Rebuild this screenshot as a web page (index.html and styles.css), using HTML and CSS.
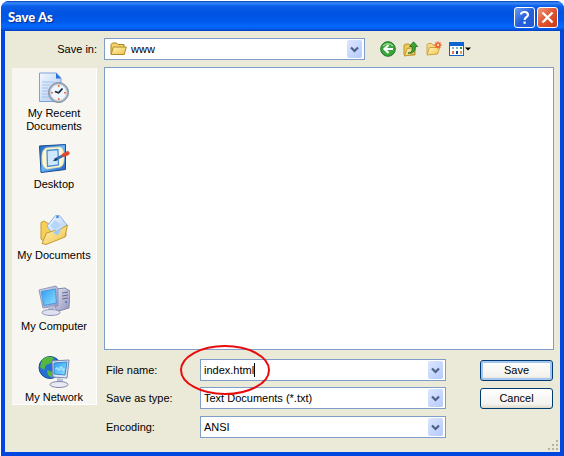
FILE: index.html
```html
<!DOCTYPE html>
<html lang="en">

<head>
    <meta charset="UTF-8" />
    <meta name="viewport" content="width=device-width, initial-scale=1.0" />
    <title>Save As</title>
    <link rel="stylesheet" href="styles.css">
</head>

<body>
    <!-- Shared gradients -->
    <svg class="defs" width="0" height="0" aria-hidden="true">
        <defs>
            <linearGradient id="folder" x1="0" y1="0" x2="1" y2="1">
                <stop offset="0" stop-color="#fff6b8" />
                <stop offset="1" stop-color="#f0c04a" />
            </linearGradient>
            <linearGradient id="screen" x1="0" y1="0" x2="1" y2="1">
                <stop offset="0" stop-color="#2f9cf0" />
                <stop offset="1" stop-color="#8fe0ff" />
            </linearGradient>
            <linearGradient id="paper" x1="0" y1="0" x2="1" y2="1">
                <stop offset="0" stop-color="#f4f9ff" />
                <stop offset="1" stop-color="#a9c8f2" />
            </linearGradient>
            <linearGradient id="metal" x1="0" y1="0" x2="1" y2="1">
                <stop offset="0" stop-color="#e4e4f2" />
                <stop offset="1" stop-color="#8f92b8" />
            </linearGradient>
            <linearGradient id="desk" x1="0" y1="0" x2="1" y2="1">
                <stop offset="0" stop-color="#1c62c0" />
                <stop offset=".5" stop-color="#6ab8fa" />
                <stop offset="1" stop-color="#1c5cb8" />
            </linearGradient>
        </defs>
        <symbol id="chevron" viewBox="0 0 9 7">
            <path d="M1 1.5l3.5 3.5L8 1.5" fill="none" stroke="#4d6185" stroke-width="2.2" />
        </symbol>
    </svg>

    <div class="window">
        <header class="titlebar">
            <h1>Save As</h1>
            <button class="title-btn help" aria-label="Help">
                <svg width="19" height="19" viewBox="0 0 19 19"><path d="M6 6.5C6 3.2 13 3 13 6.7c0 2.5-3.4 2.5-3.4 5.2M9.6 13.4v2.4" fill="none" stroke="#fff" stroke-width="2.2" /></svg>
            </button>
            <button class="title-btn close" aria-label="Close">
                <svg width="19" height="19" viewBox="0 0 19 19"><path d="M4.5 4.5l10 10M14.5 4.5l-10 10" fill="none" stroke="#fff" stroke-width="2.4" /></svg>
            </button>
        </header>

        <main class="content">
            <div class="toolbar">
                <label for="saveIn">Save in:</label>
                <div class="combo save-in">
                    <svg class="combo-icon" width="17" height="14" viewBox="0 0 17 14"><path d="M1 12V2.5L2.500 1h4L8 2.500h6V5" fill="#f3d36a" stroke="#a98220" /><path d="M1 12.500L3.500 5h12.800l-2 7.500z" fill="url(#folder)" stroke="#b08a26" /></svg>
                    <select id="saveIn"><option>www</option></select>
                    <span class="arrow"><svg width="9" height="7"><use href="#chevron" /></svg></span>
                </div>
                <div class="tools">
                    <button aria-label="Back">
                        <svg width="16" height="16" viewBox="0 0 16 16"><circle cx="8" cy="8" r="7.3" fill="#3aa63c" stroke="#1c7425" /><path d="M3 5a6 5 0 0 1 10 0" fill="none" stroke="#8ed488" stroke-width="1.5" /><path d="M13 8H5M8.500 4L4.500 8l4 4" fill="none" stroke="#fff" stroke-width="2.200" /></svg>
                    </button>
                    <button aria-label="Up one level">
                        <svg width="16" height="16" viewBox="0 0 16 16"><path d="M1 14V4l2-1h3l1 1h5v10z" fill="#f0ca58" stroke="#bd9430" /><path d="M1.500 15L4 7.500l8.500-1L11 13.500z" fill="url(#folder)" stroke="#bd9430" /><path d="M5 12c4 0 4.500-3 4.200-6.500H6.500L10.500.8l4.200 4.700h-2.500c.2 4.500-2 7.500-7.200 6.500z" fill="#38a838" stroke="#176d20" stroke-width=".8" /></svg>
                    </button>
                    <button aria-label="Create new folder">
                        <svg width="16" height="16" viewBox="0 0 16 16"><path d="M1 13V3.500L2 2.500h3.500L7 4h5v3" fill="#f5d983" stroke="#c9a348" /><path d="M1 14l2.500-7.500h10.300L11.500 13z" fill="url(#folder)" stroke="#cba548" /><path d="M12 .5v7M8.500 4h7M9.500 1.500l5 5M14.500 1.500l-5 5" stroke="#f0582c" stroke-width="1.400" /><circle cx="12" cy="4" r="1.200" fill="#ffe3a0" /></svg>
                    </button>
                    <button aria-label="View menu">
                        <svg width="22" height="16" viewBox="0 0 22 16"><rect x=".5" y="1.5" width="14" height="13" fill="#fff" stroke="#1763c4" /><path d="M0 1h15v4H0z" fill="#0c63d2" /><path d="M3 6h2v2H3zM7 6h2v2H7z" fill="#8cacc8" /><path d="M11 6h2v2h-2z" fill="#2e9b3c" /><path d="M3 10h2v3H3z" fill="#e6704f" /><path d="M7 10h2v3H7z" fill="#123f91" /><path d="M11 10h2v3h-2z" fill="#d2a35b" /><path d="M16 6.500h6l-3 3z" fill="#000" /></svg>
                    </button>
                </div>
            </div>

            <div class="main">
                <nav class="places">
                    <a href="#recent">
                        <svg width="32" height="32" viewBox="0 0 32 32"><path d="M1.500 1h17l4.500 5v23.500H1.500z" fill="url(#paper)" stroke="#7fa1d8" /><path d="M18 1v5.500h5z" fill="#2772d5" /><path d="M4 10h12M4 13h8M4 16h6M4 19h6M4 22h6M4 25h8" stroke="#a4c0ea" /><circle cx="20.500" cy="20.500" r="10" fill="#a9b3c2" stroke="#7c879a" /><circle cx="20.500" cy="20.500" r="8" fill="#eef7ff" stroke="#ced8e5" /><path d="M20.500 21l4-4.500M17 19.500l4 1.500" stroke="#17233c" stroke-width="1.800" /><path d="M20 13h1.500v2H20zM20 26h1.500v2H20zM13 20h2v1.500h-2zM26 20h2v1.500h-2z" fill="#ee7333" /></svg>
                        <span>My Recent Documents</span>
                    </a>
                    <a href="#desktop">
                        <svg width="32" height="32" viewBox="0 0 32 32"><path d="M1.500 3l26-1.500v25L3 29.500z" fill="url(#desk)" stroke="#174c95" /><path d="M8 5l14-1c3 1 4 5 4 10 0 6-1 9-4 10L9 26c-4-2-5-5-5-11S5 7 8 5z" fill="#fff6cf" stroke="#ecdca4" stroke-width=".7" /><path d="M9 7.500l11-1 .5 15.500-11 1.500z" fill="#cfe8ff" stroke="#4a90d4" stroke-width="1.300" /><path d="M16.500 17l10.500-5.500" stroke="#3b6cb0" stroke-width="2.600" /><path d="M14.500 18.200l4-3.200 1 2.200z" fill="#16325d" /><path d="M26 12l3.500-1.800" stroke="#e04830" stroke-width="4" stroke-linecap="round" /></svg>
                        <span>Desktop</span>
                    </a>
                    <a href="#documents">
                        <svg width="32" height="32" viewBox="0 0 32 32"><path d="M3 25V8.500L6 7l5 3v5l16-2 1 9L8 29z" fill="#f6cf58" stroke="#c39a34" /><path d="M17.500 1.500h4L29 11 18 26 9 12z" fill="url(#paper)" stroke="#8ab4ea" /><path d="M17 6l6 5-6 5-5-4z" fill="#b4d6fa" /><circle cx="19.500" cy="3" r="1.300" fill="#3c86d0" /><path d="M4 29.500L8.500 19l8-2.500 2 1L29.500 11 27 23 8 30.500z" fill="url(#folder)" stroke="#c39a34" /><path d="M15 18.500l9-4.500-4.500 7.500z" fill="#9ccaf8" /></svg>
                        <span>My Documents</span>
                    </a>
                    <a href="#computer">
                        <svg width="32" height="32" viewBox="0 0 32 32"><path d="M18 4l9-1 5 3-1 17-10 3-4-3z" fill="url(#metal)" stroke="#8488b0" /><path d="M24 8l6-1M24 11l6-1M24 14l6-1" stroke="#666b98" /><circle cx="28" cy="17" r="1" fill="#456ec5" /><path d="M1 5l17-4 2 3v17L5 23z" fill="url(#metal)" stroke="#8e95c0" /><path d="M3 6.500L17.500 4l.8 14L6 20.500z" fill="url(#screen)" stroke="#4b9ae0" /><path d="M10 22l6-1 1 5-6 1z" fill="#b9bdd6" /><ellipse cx="13" cy="27.500" rx="9" ry="3" fill="#dfe1ef" stroke="#8f93b6" /></svg>
                        <span>My Computer</span>
                    </a>
                    <a href="#network">
                        <svg width="32" height="32" viewBox="0 0 32 32"><circle cx="12" cy="11.500" r="11" fill="#256fd1" stroke="#184b9a" /><path d="M4 4c3-4 9-4 12-2l-3 5-5 2-2 5-4-3zM9 14l6 2-1 6-4-3z" fill="#55b83c" /><path d="M14 5l17-1-2 18-14-1z" fill="#e0e6f4" stroke="#7c89af" /><path d="M16 7l13-1-2 13-11-1z" fill="url(#screen)" stroke="#3c88cc" /><path d="M18 14v-2h2v2h2v-3h2v3h2v-2" fill="none" stroke="#b9efff" /><path d="M19 22l6 1v4h-6z" fill="#bdc2d8" /><ellipse cx="21" cy="28.500" rx="9" ry="3" fill="#e8eaf4" stroke="#8389aa" /></svg>
                        <span>My Network</span>
                    </a>
                </nav>

                <div class="right">
                    <div class="file-list" role="listbox" aria-label="Files"></div>

                    <form class="fields" onsubmit="return false">
                        <div class="field">
                            <label for="fileName">File name:</label>
                            <div class="combo">
                                <input type="text" id="fileName" value="index.html" />
                                <span class="caret"></span>
                                <button type="button" class="arrow" aria-label="Recent names"><svg width="9" height="7"><use href="#chevron" /></svg></button>
                                <svg class="marker" width="92" height="52" viewBox="0 0 92 52"><ellipse cx="46" cy="26" rx="44" ry="24" fill="none" stroke="#e80c0c" stroke-width="2" /></svg>
                            </div>
                            <button class="push default" type="submit">Save</button>
                        </div>
                        <div class="field">
                            <label for="fileType">Save as type:</label>
                            <div class="combo">
                                <select id="fileType"><option>Text Documents (*.txt)</option></select>
                                <span class="arrow"><svg width="9" height="7"><use href="#chevron" /></svg></span>
                            </div>
                            <button class="push" type="button">Cancel</button>
                        </div>
                        <div class="field encoding">
                            <label for="encoding">Encoding:</label>
                            <div class="combo">
                                <select id="encoding"><option>ANSI</option></select>
                                <span class="arrow"><svg width="9" height="7"><use href="#chevron" /></svg></span>
                            </div>
                        </div>
                    </form>
                </div>
            </div>
            <svg class="grip" width="11" height="11" viewBox="0 0 11 11"><path d="M8 0h2v2H8zM4 4h2v2H4zM8 4h2v2H8zM0 8h2v2H0zM4 8h2v2H4zM8 8h2v2H8z" fill="#b5b19e" /></svg>
        </main>
    </div>
</body>

</html>
```
FILE: styles.css
```css
* {
    margin: 0;
    padding: 0;
    box-sizing: border-box;
}

body {
    background-color: #ffffff;
    font-family: "Liberation Sans", Arial, sans-serif;
    font-size: 11px;
    line-height: 13px;
    color: #000000;
    min-height: 100vh;
    display: flex;
    padding: 1px 0 0 1px;
}

button,
input,
select {
    font: inherit;
    color: inherit;
}

svg {
    display: block;
}

.defs {
    position: absolute;
}

.window {
    flex: 1;
    display: flex;
    flex-direction: column;
    background-color: #0046df;
    border-radius: 8px 8px 0 0;
    overflow: hidden;
}

/* Title bar */
.titlebar {
    display: flex;
    align-items: center;
    gap: 2px;
    height: 30px;
    padding: 3px 6px 0 7px;
    background: linear-gradient(#0842b8 0, #3a8cfa 2px, #0a5ee8 5px, #0054e0 12px, #0058ec 20px, #0468fc 25px, #0362f4 27px, #0040c0 30px);
}

.titlebar h1 {
    flex: 1;
    font-family: Lato, "Open Sans", sans-serif;
    font-size: 13px;
    font-weight: 900;
    color: #ffffff;
    text-shadow: 1px 1px 1px #0a2a80;
}

.title-btn {
    width: 21px;
    height: 21px;
    border: 1px solid #ffffff;
    border-radius: 3px;
}

.help {
    background: linear-gradient(135deg, #6c9cf8, #2460dc 50%, #2458d0);
}

.close {
    background: linear-gradient(135deg, #f0987c, #e05430 50%, #c83c14);
}

/* Dialog body */
.content {
    flex: 1;
    display: flex;
    flex-direction: column;
    gap: 7px;
    margin: 0 4px 4px;
    padding: 7px 6px 14px 7px;
    background-color: #ebe9d8;
    position: relative;
}

.toolbar {
    display: flex;
    align-items: center;
    gap: 7px;
}

.toolbar label {
    width: 85px;
    text-align: right;
}

.combo {
    display: flex;
    align-items: center;
    flex: 1;
    height: 22px;
    padding: 0 2px 0 3px;
    background-color: #ffffff;
    border: 1px solid #7f9dc9;
    position: relative;
}

.combo select,
.combo input {
    flex: 1;
    min-width: 0;
    height: 18px;
    border: none;
    outline: none;
    background: none;
    appearance: none;
}

.save-in {
    gap: 4px;
    padding-left: 5px;
    max-width: 261px;
}

.arrow {
    display: flex;
    align-items: center;
    justify-content: center;
    width: 15px;
    height: 18px;
    border: none;
    border-radius: 2px;
    background: linear-gradient(135deg, #dce6ff, #b5cafa);
    pointer-events: none;
}

.tools {
    display: flex;
    gap: 7px;
    padding-left: 8px;
}

.tools button {
    border: none;
    background: none;
}

.main {
    flex: 1;
    display: flex;
    gap: 7px;
}

.places {
    display: flex;
    flex-direction: column;
    width: 85px;
    margin: 1px 0 33px;
    padding-top: 4px;
    background-color: #f7f6f1;
    border-right: 1px solid #ffffff;
    border-bottom: 1px solid #ffffff;
}

.places a {
    display: flex;
    flex-direction: column;
    align-items: center;
    gap: 3px;
    min-height: 71px;
    color: #000000;
    text-align: center;
    text-decoration: none;
}

.places a:last-child {
    min-height: 0;
}

.places a:first-child span {
    padding: 0 12px;
}

.right {
    flex: 1;
    display: flex;
    flex-direction: column;
    gap: 9px;
}

.file-list {
    flex: 1;
    background-color: #ffffff;
    border: 1px solid #7f9dc9;
}

/* Fields and buttons */
.fields {
    display: flex;
    flex-direction: column;
    gap: 6px;
}

.field {
    display: flex;
    align-items: center;
    padding-right: 1px;
}

.field label {
    width: 96px;
    padding-left: 2px;
}

.encoding {
    margin-top: 1px;
    padding-right: 108px;
}

.caret {
    position: absolute;
    left: 53px;
    top: 3px;
    width: 1px;
    height: 14px;
    background-color: #000000;
}

/* Red ring around the file name */
.marker {
    position: absolute;
    left: -22px;
    top: -16px;
    z-index: 2;
    pointer-events: none;
}

.push {
    width: 73px;
    height: 21px;
    margin-left: 34px;
    border: 1px solid #003c74;
    border-radius: 3px;
    background: linear-gradient(#ffffff, #f3f2ed 80%, #dcd8ca);
}

.default {
    box-shadow: inset 0 0 0 2px #a6c5f0;
}

.grip {
    position: absolute;
    right: 1px;
    bottom: 1px;
}
```
